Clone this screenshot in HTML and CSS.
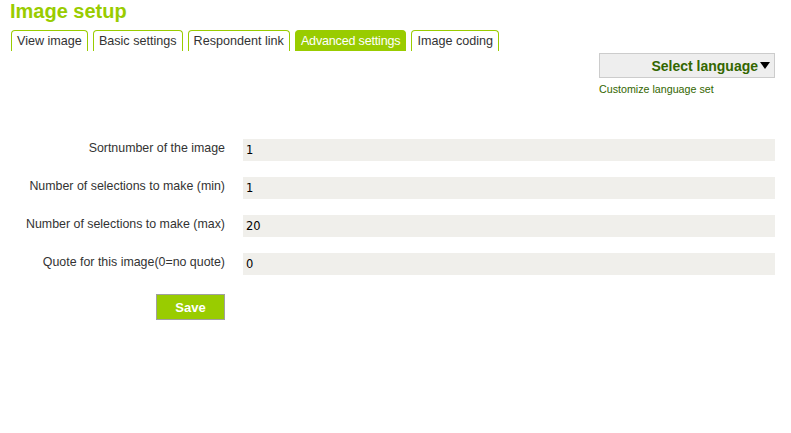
FILE: index.html
```html
<!DOCTYPE html>
<html>
<head>
<meta charset="utf-8">
<link rel="stylesheet" href="styles.css">
</head>
<body>
<h1 class="title">Image setup</h1>
<div class="tabs">
  <a class="tab">View image</a>
  <a class="tab">Basic settings</a>
  <a class="tab">Respondent link</a>
  <a class="tab active">Advanced settings</a>
  <a class="tab">Image coding</a>
</div>
<div class="lang">
  <div class="lang-btn">Select language<span class="caret"></span></div>
  <a class="lang-link">Customize language set</a>
</div>
<form class="form">
  <div class="row"><label>Sortnumber of the image</label><div class="field">1</div></div>
  <div class="row"><label>Number of selections to make (min)</label><div class="field">1</div></div>
  <div class="row"><label>Number of selections to make (max)</label><div class="field">20</div></div>
  <div class="row"><label>Quote for this image(0=no quote)</label><div class="field">0</div></div>
  <div class="row save-row"><span class="spacer"></span><button type="button" class="save">Save</button></div>
</form>
</body>
</html>
```
FILE: styles.css
```css
* { box-sizing: border-box; }
body {
  margin: 0;
  font-family: "Liberation Sans", Arial, sans-serif;
  color: #333;
  background: #fff;
}
.title {
  margin: 0;
  padding: 0 0 0 10px;
  font-size: 20px;
  line-height: 22px;
  font-weight: bold;
  color: #99cc00;
}
.tabs {
  display: flex;
  gap: 5px;
  margin: 8px 0 0 11px;
  height: 21px;
}
.tab {
  display: block;
  height: 21px;
  padding: 0 5px;
  border: 1px solid #99cc00;
  border-bottom: none;
  border-radius: 4px 4px 0 0;
  font-size: 12.6px;
  line-height: 21px;
  color: #333;
  background: #fff;
}
.tab.active {
  background: #99cc00;
  color: #fff;
  letter-spacing: -0.2px;
}
.lang {
  display: flex;
  flex-direction: column;
  align-items: flex-start;
  margin: 2px 16px 0 auto;
  width: 176px;
}
.lang-btn {
  width: 176px;
  height: 25px;
  border: 1px solid #cccccc;
  background: #eeeeee;
  font-size: 14px;
  font-weight: bold;
  color: #336600;
  padding-right: 4px;
  display: flex;
  justify-content: flex-end;
  align-items: center;
}
.caret {
  display: inline-block;
  width: 0;
  height: 0;
  border-left: 5px solid transparent;
  border-right: 5px solid transparent;
  border-top: 7px solid #000;
  margin-left: 2px;
}
.lang-link {
  font-size: 10.7px;
  color: #336600;
  margin-top: 4px;
  line-height: 14px;
}
.form {
  margin: 43px 16px 0 0;
  display: flex;
  flex-direction: column;
  gap: 16px;
}
.row {
  display: flex;
  align-items: center;
  gap: 18px;
  height: 22px;
}
.row label {
  width: 225px;
  flex: none;
  text-align: right;
  font-size: 12.4px;
  color: #333;
  position: relative;
  top: -2px;
}
.field {
  flex: 1;
  height: 22px;
  background: #f0efeb;
  line-height: 22px;
  padding-left: 3px;
  color: #000;
  font-family: "DejaVu Sans", sans-serif;
  font-size: 11.5px;
}
.save-row {
  height: 26px;
  margin-top: 3px;
  gap: 0;
}
.save-row .spacer {
  width: 156px;
  flex: none;
}
.save {
  width: 69px;
  height: 26px;
  background: #99cc00;
  border: 1px solid #a0a0a0;
  color: #fff;
  font-weight: bold;
  font-size: 13px;
  font-family: "Liberation Sans", Arial, sans-serif;
  padding: 0;
}
```
